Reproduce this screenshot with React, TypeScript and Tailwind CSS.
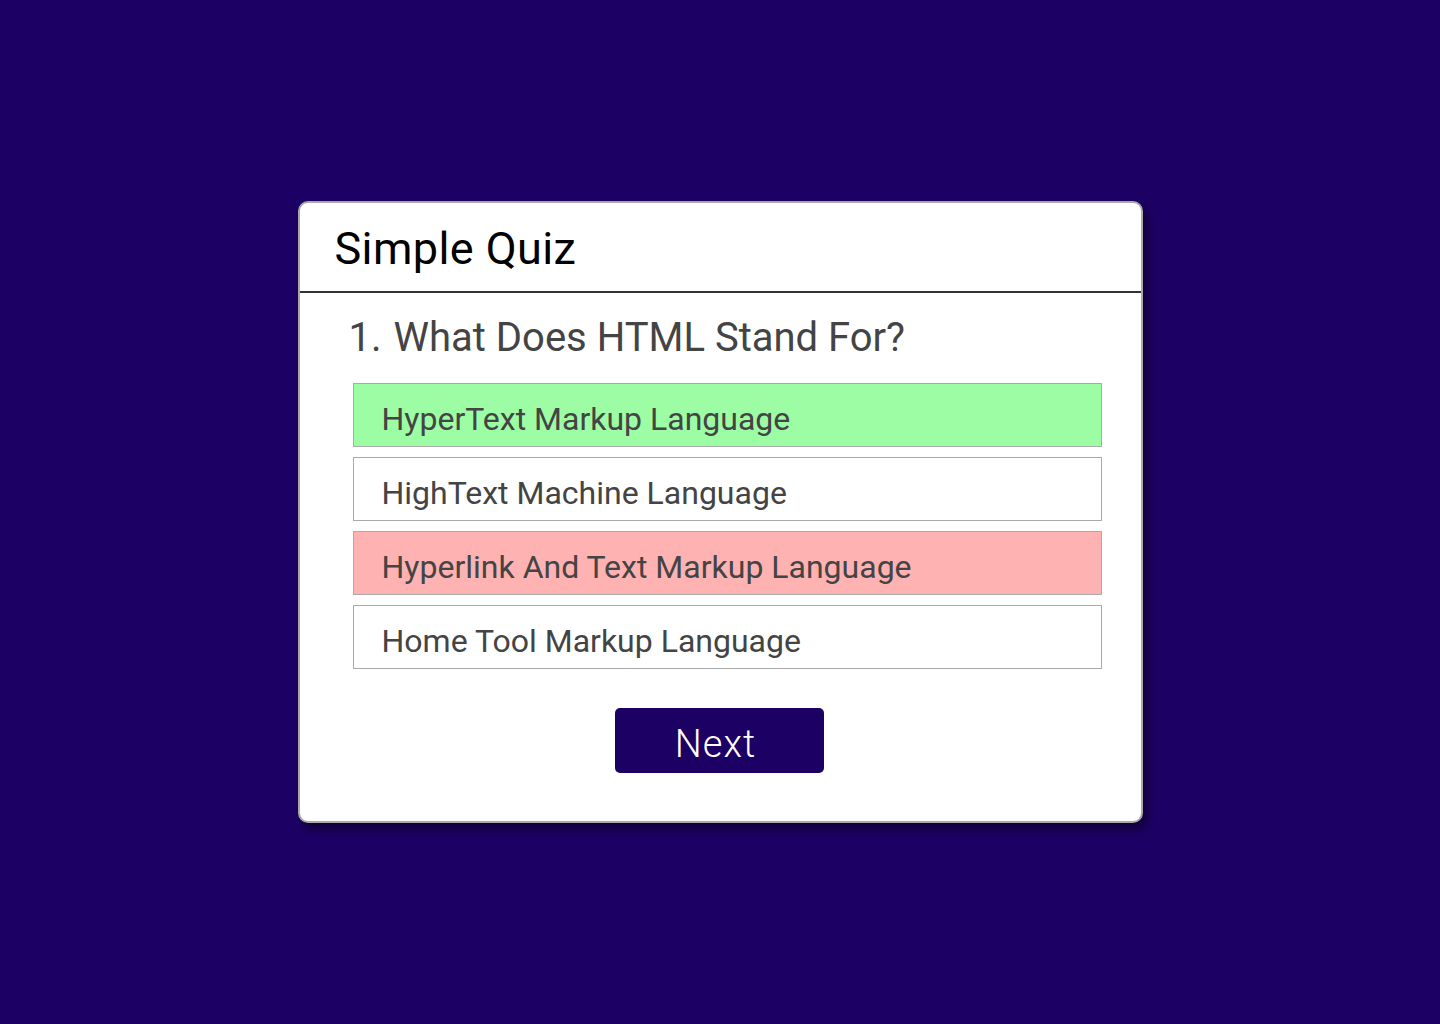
import React from "react";

const options = [
  { text: "HyperText Markup Language", bg: "bg-[#9dfda4]" },
  { text: "HighText Machine Language", bg: "bg-white" },
  { text: "Hyperlink And Text Markup Language", bg: "bg-[#ffb2b2]" },
  { text: "Home Tool Markup Language", bg: "bg-white" },
];

export default function App() {
  return (
    <div className="w-[1440px] h-[1024px] bg-[#1d0064] flex items-start justify-center pt-[201px] font-['Roboto',sans-serif]">
      <div className="w-[845px] h-[622px] bg-white border-2 border-[#a9a9a9] rounded-[10px] shadow-[4px_6px_10px_rgba(0,0,0,0.45)] flex flex-col">
        <div className="h-[90px] border-b-2 border-[#333] flex items-center pl-[35px] pt-[2px]">
          <h1 className="text-[45px] leading-none text-black tracking-[0.4px]">Simple Quiz</h1>
        </div>
        <div className="pl-[49px] pr-[39px] pt-[22px]">
          <h2 className="text-[40px] leading-[46px] text-[#444] flex">
            <span className="mr-[12px]">1.</span>
            <span>What Does HTML Stand For?</span>
          </h2>
          <div className="mt-[22px] ml-[4px] flex flex-col gap-[10px]">
            {options.map((o) => (
              <div
                key={o.text}
                className={`h-[64px] border border-[#aaa] ${o.bg} pl-[28px] pt-[17px] text-[32px] leading-[36px] text-[#444]`}
              >
                {o.text}
              </div>
            ))}
          </div>
          <div className="flex justify-center mt-[39px] pr-[12px]">
            <button className="w-[209px] h-[65px] bg-[#1d0064] rounded-[5px] text-white text-[38px] font-light tracking-[1px] pt-[6px] pr-[7px] leading-none">
              Next
            </button>
          </div>
        </div>
      </div>
    </div>
  );
}
